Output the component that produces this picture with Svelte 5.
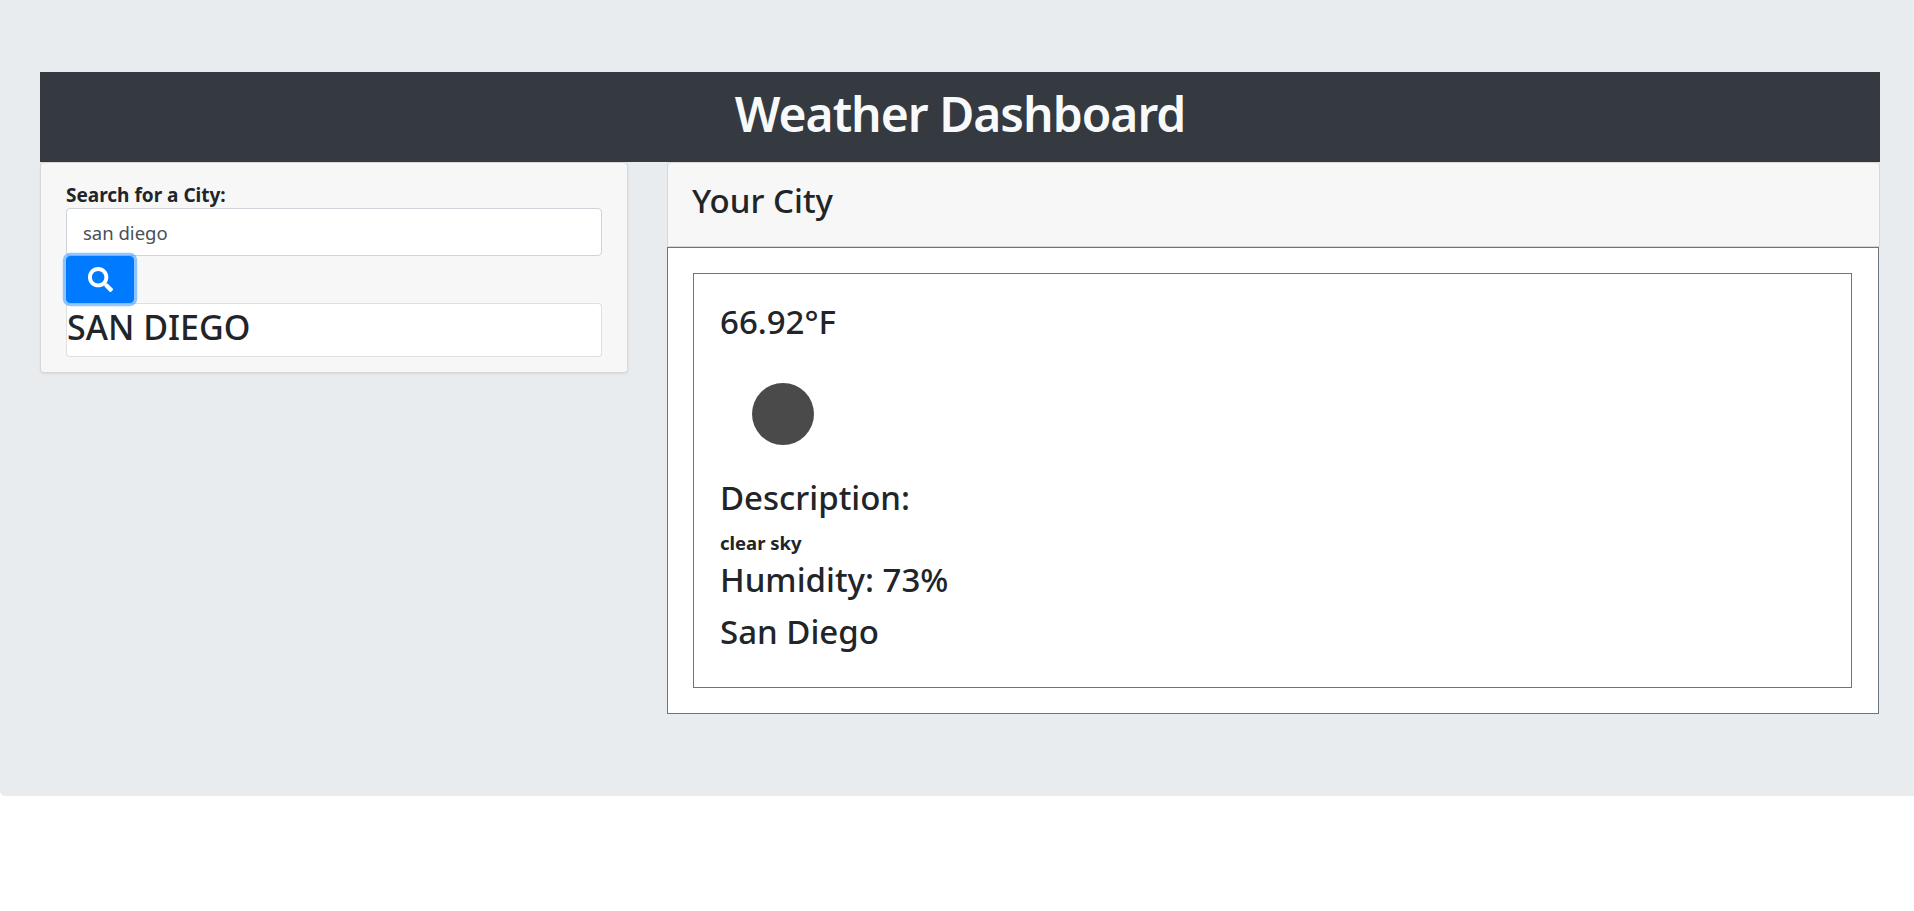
<script lang="ts">
  const city = "san diego";
  const weather = {
    temp: "66.92°F",
    description: "clear sky",
    humidity: "73%",
    name: "San Diego"
  };
</script>

<div class="jumbotron">
  <h1 class="title">Weather Dashboard</h1>
  <div class="row">
    <aside class="search-card">
      <label class="search-label" for="city">Search for a City:</label>
      <input id="city" class="search-input" type="text" value={city} />
      <button class="search-btn" aria-label="Search">
        <svg viewBox="0 0 512 512" width="25" height="25" fill="currentColor">
          <path d="M505 442.7L405.3 343c-4.5-4.5-10.6-7-17-7H372c27.6-35.3 44-79.7 44-128C416 93.1 322.9 0 208 0S0 93.1 0 208s93.1 208 208 208c48.3 0 92.7-16.4 128-44v16.3c0 6.4 2.5 12.5 7 17l99.7 99.7c9.4 9.4 24.6 9.4 33.9 0l28.3-28.3c9.4-9.4 9.4-24.6.1-34zM208 336c-70.7 0-128-57.2-128-128 0-70.7 57.2-128 128-128 70.7 0 128 57.2 128 128 0 70.7-57.2 128-128 128z" />
        </svg>
      </button>
      <ul class="history">
        <li>SAN DIEGO</li>
      </ul>
    </aside>

    <section class="city-card">
      <h3 class="city-header">Your City</h3>
      <div class="outer-box">
        <div class="inner-box">
          <h3 class="temp">{weather.temp}</h3>
          <div class="icon-wrap"><span class="icon"></span></div>
          <h3 class="desc-title">Description:</h3>
          <p class="desc">{weather.description}</p>
          <h3 class="humidity">Humidity: {weather.humidity}</h3>
          <h3 class="name">{weather.name}</h3>
        </div>
      </div>
    </section>
  </div>
</div>

<style>
  :global(body) {
    margin: 0;
    background: #fff;
    color: #212529;
    font-family: "Noto Sans", "Open Sans", sans-serif;
  }

  .jumbotron {
    background: #e9ecef;
    padding: 72px 34px 82px 40px;
    border-radius: 0 0 0 5px;
    height: 796px;
    box-sizing: border-box;
  }

  h1, h3, p, ul {
    margin: 0;
    padding: 0;
  }

  .title {
    background: #343a40;
    color: #f8f9fa;
    height: 90px;
    line-height: 84px;
    font-size: 48px;
    font-weight: 600;
    text-align: center;
    letter-spacing: -1px;
  }

  .row {
    display: grid;
    grid-template-columns: 588px 1fr;
    column-gap: 39px;
    align-items: start;
  }

  .search-card {
    background: #f7f7f7;
    border: 1px solid rgba(0, 0, 0, 0.125);
    border-radius: 4px;
    box-shadow: 0 1px 2px rgba(0, 0, 0, 0.075);
    padding: 20px 25px 15px;
    display: flex;
    flex-direction: column;
    box-sizing: border-box;
    height: 211px;
  }

  .search-label {
    font-size: 19px;
    font-weight: 700;
    line-height: 24px;
    margin-bottom: 1px;
  }

  .search-input {
    height: 48px;
    box-sizing: border-box;
    width: 100%;
    border: 1px solid #ced4da;
    border-radius: 4px;
    padding: 0 16px;
    font: inherit;
    font-size: 18.5px;
    color: #495057;
    background: #fff;
  }

  .search-btn {
    width: 68px;
    height: 47px;
    background: #007bff;
    border: 1px solid #007bff;
    color: #fff;
    border-radius: 4px;
    box-shadow: 0 0 0 3.2px rgba(38, 143, 255, 0.5);
    display: flex;
    align-items: center;
    justify-content: center;
    padding: 0;
    position: relative;
  }

  .history {
    list-style: none;
    background: #fff;
    border: 1px solid rgba(0, 0, 0, 0.125);
    border-radius: 4px;
    height: 54px;
    box-sizing: border-box;
    font-size: 34px;
    font-weight: 500;
    line-height: 46px;
  }

  .city-card {
    display: flex;
    flex-direction: column;
  }

  .city-header {
    background: #f7f7f7;
    border: 1px solid rgba(0, 0, 0, 0.125);
    border-bottom-color: #d5d6d7;
    border-radius: 4px 4px 0 0;
    height: 85px;
    box-sizing: border-box;
    padding: 0 24px;
    font-size: 33px;
    font-weight: 500;
    line-height: 75px;
  }

  .outer-box {
    border: 1px solid #6c757d;
    background: #fff;
    padding: 25px 26px 25px 25px;
    margin-right: 1px;
    height: 467px;
    box-sizing: border-box;
  }

  .inner-box {
    border: 1px solid #6c757d;
    padding: 29px 26px 26px;
    height: 100%;
    box-sizing: border-box;
  }

  .temp, .desc-title, .humidity, .name {
    font-size: 33px;
    font-weight: 500;
    line-height: 38px;
  }

  .icon-wrap {
    width: 100px;
    height: 100px;
    display: flex;
    align-items: center;
    justify-content: center;
    margin: 23px 0 15px 13px;
  }

  .icon {
    width: 62px;
    height: 62px;
    border-radius: 50%;
    background: #4a4a4a;
  }

  .desc {
    font-size: 18.5px;
    font-weight: 700;
    line-height: 24px;
    margin: 14px 0 6px;
  }

  .name {
    margin-top: 14px;
  }
</style>
